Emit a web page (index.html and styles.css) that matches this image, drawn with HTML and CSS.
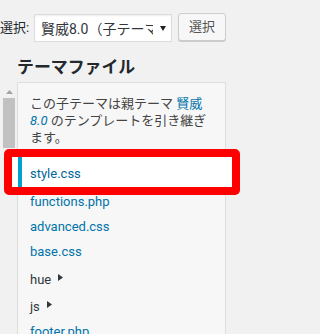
FILE: index.html
```html
<!DOCTYPE html>
<html lang="ja">
<head>
<meta charset="utf-8">
<title>テーマファイル</title>
<link rel="stylesheet" href="styles.css">
</head>
<body>
<div class="page">
  <form class="picker">
    <label class="picker-label">選択:</label>
    <div class="select">
      <span class="select-text">賢威8.0（子テーマ）</span>
      <svg class="select-arrow" viewBox="0 0 6 5" aria-hidden="true"><path d="M0 0H6L3 5Z"/></svg>
    </div>
    <button class="btn" type="button">選択</button>
  </form>
  <div class="side">
    <h2 class="side-title">テーマファイル</h2>
    <div class="scrollbar" aria-hidden="true">
      <svg class="scroll-up" viewBox="0 0 7 4"><path d="M3.5 0L7 4H0Z"/></svg>
      <span class="scroll-thumb"></span>
    </div>
    <ul class="files">
      <li class="howto">この子テーマは親テーマ <a class="parent-link" href="#">賢威<wbr><span class="ver">8.0</span></a> のテンプレートを引き継ぎます。</li>
      <li class="file current"><a href="#">style.css</a></li>
      <li class="file"><a href="#">functions.php</a></li>
      <li class="file"><a href="#">advanced.css</a></li>
      <li class="file"><a href="#">base.css</a></li>
      <li class="folder"><span class="folder-label">hue<svg class="folder-arrow" viewBox="0 0 5 7" aria-hidden="true"><path d="M0 0L5 3.5L0 7Z"/></svg></span></li>
      <li class="folder"><span class="folder-label">js<svg class="folder-arrow" viewBox="0 0 5 7" aria-hidden="true"><path d="M0 0L5 3.5L0 7Z"/></svg></span></li>
      <li class="file"><a href="#">footer.php</a></li>
      <li class="file"><a href="#">header.php</a></li>
      <li class="file"><a href="#">index.php</a></li>
    </ul>
  </div>
</div>
</body>
</html>
```
FILE: styles.css
```css
* { box-sizing: border-box; }

html, body {
  margin: 0;
  height: 100%;
  overflow: hidden;
}

body {
  background: #f1f1f1;
  font-family: Roboto, "Noto Sans CJK JP", sans-serif;
  font-size: 13px;
  color: #444;
}

.page {
  width: 226px;
}

/* theme picker row */
.picker {
  display: flex;
  align-items: flex-start;
  margin: 0;
  padding-top: 13px;
}

.picker-label {
  flex: 1;
  margin-top: 1px;
  line-height: 28px;
  color: #23282d;
  white-space: nowrap;
}

.select {
  flex: none;
  width: 138px;
  height: 28px;
  margin-top: 1px;
  display: flex;
  align-items: center;
  padding: 0 5px 0 6px;
  background: #fff;
  border: 1px solid #ddd;
  box-shadow: inset 0 1px 2px rgba(0, 0, 0, 0.07);
}

.select-text {
  flex: 1;
  min-width: 0;
  overflow: hidden;
  white-space: nowrap;
  font-size: 14px;
  color: #32373c;
}

.select-arrow {
  flex: none;
  width: 6px;
  height: 5px;
  margin-left: 7px;
  fill: #222;
}

.btn {
  flex: none;
  width: 48px;
  height: 28px;
  margin-left: 6px;
  padding: 0;
  border: 1px solid #ccc;
  border-radius: 3px;
  background: #f7f7f7;
  box-shadow: 0 1px 0 #ccc;
  color: #555;
  font-family: inherit;
  font-size: 13px;
  line-height: 26px;
}

/* sidebar */
.side {
  display: grid;
  grid-template-columns: 17px 1fr;
}

.side-title {
  grid-column: 2;
  grid-row: 1;
  margin: 14px 0 4px;
  font-size: 16.9px;
  line-height: 22px;
  font-weight: 700;
  color: #23282d;
}

.scrollbar {
  grid-column: 1;
  grid-row: 2;
  display: flex;
  flex-direction: column;
  align-items: flex-start;
  padding-top: 8px;
}

.scroll-up {
  width: 7px;
  height: 4px;
  margin-left: 6px;
  fill: #a3a3a3;
}

.scroll-thumb {
  display: block;
  width: 12px;
  height: 50px;
  margin: 4px 0 0 3px;
  background: #c1c1c1;
}

.files {
  grid-column: 2;
  grid-row: 2;
  list-style: none;
  margin: 0;
  padding: 0;
  min-height: 300px;
  background: #f7f7f7;
  border: 1px solid #ddd;
}

.howto {
  padding: 12px 12px 11px;
  line-height: 17px;
  color: #444;
}

.parent-link {
  color: #0073aa;
  text-decoration: none;
}

.ver {
  font-style: italic;
}

.file a {
  display: block;
  padding: 3px 0 3px 12px;
  line-height: 19px;
  color: #0073aa;
  text-decoration: none;
}

.folder-label {
  display: block;
  padding: 5.5px 0 3px 12px;
  line-height: 19px;
  color: #32373c;
}

.folder-arrow {
  width: 5px;
  height: 7px;
  margin-left: 7px;
  vertical-align: 3px;
  fill: #32373c;
}

/* current file, with the red annotation frame */
.file.current {
  position: relative;
  z-index: 1;
  margin-bottom: 2px;
}

.file.current::before {
  content: "";
  position: absolute;
  top: 0;
  bottom: 0;
  left: -6px;
  right: -7px;
  background: #fff;
  z-index: -1;
}

.file.current::after {
  content: "";
  position: absolute;
  top: -8px;
  bottom: -8px;
  left: -14px;
  right: -15px;
  border: 8px solid #ff0000;
  border-radius: 5px;
}

.file.current a {
  padding: 6.5px 0 4.5px 12px;
  background: #fff;
  box-shadow: inset 4px 0 0 #00a0d2;
  color: #00669b;
}
```
